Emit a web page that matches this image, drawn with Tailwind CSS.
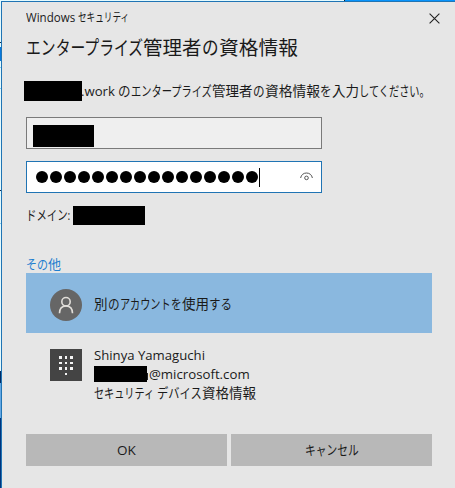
<!DOCTYPE html>
<html lang="ja">
<head>
<meta charset="utf-8">
<title>Windows セキュリティ</title>
<script src="https://cdn.jsdelivr.net/npm/@tailwindcss/browser@4"></script>
</head>
<body class="w-[455px] h-[488px] overflow-hidden bg-[#e6e6e6] font-['Open_Sans','Noto_Sans_CJK_JP',sans-serif] text-[#1a1a1a]">
<div class="flex flex-col w-[455px] h-[488px]">
  <div class="flex h-px shrink-0"><div class="w-[344px] bg-[#e4fbff]"></div><div class="w-px bg-[#123]"></div><div class="flex-1 bg-[#0793fb]"></div></div>
  <div class="flex flex-1 min-h-0">
    <div class="w-px shrink-0 flex flex-col bg-[#e4fbff]">
      <div class="h-[41px]"></div><div class="h-px bg-[#102a4a]"></div><div class="h-[4px]"></div>
      <div class="h-[14px] bg-[#0878dd]"></div><div class="h-[6px]"></div><div class="h-px bg-[#86cdf0]"></div>
      <div class="h-[20px]"></div><div class="h-px bg-[#86cdf0]"></div><div class="h-[101px]"></div>
      <div class="h-px bg-[#102a4a]"></div><div class="h-[32px]"></div><div class="h-px bg-[#86cdf0]"></div>
      <div class="h-[147px]"></div><div class="h-[12px] bg-[#002a63]"></div><div class="h-[35px] bg-[#64a8e4]"></div><div class="flex-1 bg-[#00347c]"></div>
    </div>
    <main class="flex-1 min-w-0 border-l border-t border-[#2074b4] pl-[24px] flex flex-col">
      <header class="h-[32px] shrink-0 flex items-center justify-between pr-[15px] text-[12px] leading-[32px]">
        <div class="flex whitespace-pre"><span data-w="52">Windows </span><span data-w="51">セキュリティ</span></div>
        <svg class="w-[11px] h-[11px]" viewBox="0 0 11 11" fill="none" stroke="#222" stroke-width="1.1"><path d="M.6.6l9.800 9.800M10.400.6L.6 10.400"/></svg>
      </header>
      <h1 class="h-[28px] shrink-0 flex whitespace-pre text-[19.5px] leading-[28px]"><span data-w="117">エンタープライズ</span><span data-w="59">管理者</span><span data-w="17">の</span><span data-w="79">資格情報</span></h1>
      <p class="mt-[19px] h-[20px] -ml-[2px] shrink-0 flex whitespace-pre text-[13.5px] leading-[20px]"><span class="w-[58px] h-[20px] bg-black"></span><span class="-ml-px" data-w="37">.work </span><span data-w="13">の</span><span data-w="81">エンタープライズ</span><span data-w="41">管理者</span><span data-w="12">の</span><span data-w="55">資格情報</span><span data-w="12">を</span><span data-w="27">入力</span><span data-w="71">してください。</span></p>
      <div class="mt-[16px] w-[296px] h-[32px] shrink-0 border border-[#7a7a7a] bg-[#efefef] pl-[6px] pt-[7px]"><div class="w-[61px] h-[22px] bg-black"></div></div>
      <div class="mt-[12px] w-[296px] h-[32px] shrink-0 border border-[#2074b4] bg-white pl-[9px] pr-[8px] flex items-center">
        <div class="flex gap-[2px]" id="dots"></div>
        <div class="w-px h-[19px] bg-black ml-[1px]"></div>
        <svg class="ml-auto w-[13px] h-[9px] -mt-[2px]" viewBox="0 0 13 9" fill="none" stroke="#555" stroke-width="1"><path d="M.6 6C1.200 2.800 3.500 1 6.500 1s5.300 1.800 5.900 5"/><circle cx="6.500" cy="5.900" r="1.800"/></svg>
      </div>
      <div class="mt-[12px] h-[20px] shrink-0 flex whitespace-pre text-[13.5px] leading-[20px]"><span data-w="47">ドメイン: </span><span class="w-[72px] h-[19px] bg-black mt-px"></span></div>
      <div class="mt-[29px] h-[19px] shrink-0 flex text-[13px] leading-[20px] text-[#1f7fd0]"><span data-w="22">その</span><span data-w="13">他</span></div>
      <div class="w-[406px] h-[60px] shrink-0 bg-[#8ab8df] pl-[24px] flex items-center text-[13.5px]">
        <svg class="mt-[4px] w-[32px] h-[32px] mr-[12px]" viewBox="0 0 32 32" fill="none" stroke="#e1ded9" stroke-width="1.600"><circle cx="16" cy="16" r="16" fill="#666" stroke="none"/><circle cx="16" cy="12.700" r="4.200"/><path d="M9.500 24.300c0-4.600 2.600-7.300 6.500-7.300s6.500 2.700 6.500 7.300"/></svg>
        <div class="mt-[3px] flex"><span data-w="14">別</span><span data-w="12">の</span><span data-w="51">アカウント</span><span data-w="11">を</span><span data-w="27">使用</span><span data-w="23">する</span></div>
      </div>
      <div class="mt-[13px] h-[58px] shrink-0 pl-[24px] flex">
        <svg class="mt-[3px] w-[32px] h-[32px] mr-[12px]" viewBox="0 0 32 32"><path fill="#444" d="M0 0h32v32H0z"/><path fill="#f4f4f4" d="M9 7h3v3H9zM15 7h2v3h-2zM20 7h3v3h-3zM9 13h3v2H9zM15 13h2v2h-2zM20 13h3v2h-3zM9 18h3v3H9zM15 18h2v3h-2zM20 18h3v3h-3zM15 24h2v2h-2z"/></svg>
        <div class="text-[13.5px] leading-[19px]">
          <div class="flex h-[19px]"><span data-w="111">Shinya Yamaguchi</span></div>
          <div class="flex h-[19px]"><span class="w-[53px] h-[16px] mt-[1px] bg-black"></span><span class="w-px h-[7px] mt-[8px] bg-[#222]"></span><span class="ml-px" data-w="101">@microsoft.com</span></div>
          <div class="flex h-[19px]"><span data-w="63">セキュリティ </span><span data-w="45">デバイス</span><span data-w="54">資格情報</span></div>
        </div>
      </div>
      <div class="mt-[30px] flex gap-[4px] text-[13.5px]">
        <button class="w-[201px] h-[32px] bg-[#b8b8b8] flex items-center justify-center"><span data-w="19">OK</span></button>
        <button class="w-[201px] h-[32px] bg-[#b8b8b8] flex items-center justify-center"><span data-w="54">キャンセル</span></button>
      </div>
    </main>
  </div>
</div>
<script>
// One bullet per typed character.
document.getElementById('dots').innerHTML = '<i class="block w-[12px] h-[12px] rounded-full bg-black"></i>'.repeat(16);
for (const el of document.querySelectorAll('[data-w]')) {
  const inner = document.createElement('span');
  inner.className = 'inline-block whitespace-pre origin-left';
  inner.textContent = el.textContent;
  el.replaceChildren(inner);
  el.classList.add('block', 'shrink-0', 'text-left');
  el.style.width = el.dataset.w + 'px';
}
// Condense each run of text to its proportional width, once styles and fonts are ready.
function fit() {
  for (const el of document.querySelectorAll('[data-w]')) {
    const inner = el.firstElementChild;
    inner.style.transform = 'scaleX(' + el.dataset.w / inner.offsetWidth + ')';
  }
}
fit();
window.addEventListener('load', fit);
new ResizeObserver(fit).observe(document.querySelector('h1 span span'));
document.fonts.ready.then(fit);
</script>
</body>
</html>
